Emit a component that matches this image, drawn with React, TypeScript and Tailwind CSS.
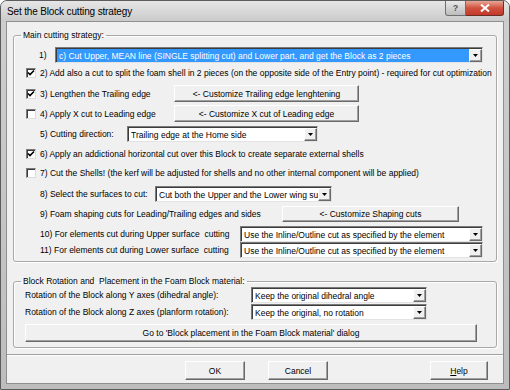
import type { ReactNode } from 'react'

function CheckBox({ checked }: { checked?: boolean }) {
  return (
    <span className="w-[10px] h-[10px] shrink-0 bg-white border border-t-[#7a7a7a] border-l-[#7a7a7a] border-r-[#dcdcdc] border-b-[#dcdcdc] shadow-[inset_1px_1px_0_#3c3c3c] flex items-center justify-center">
      {checked && (
        <svg width="8" height="8" viewBox="0 0 8 8">
          <path d="M1 3.5 L3 5.5 L7 1.5" fill="none" stroke="#000" strokeWidth="1.6" />
        </svg>
      )}
    </span>
  )
}

function Arrow() {
  return (
    <span className="w-[13px] h-full shrink-0 bg-[#f0f0f0] border border-t-white border-l-white border-r-[#696969] border-b-[#696969] shadow-[inset_-1px_-1px_0_#a0a0a0] flex items-center justify-center">
      <svg width="5" height="3" viewBox="0 0 5 3">
        <path d="M0 0 H5 L2.5 3 Z" fill="#000" />
      </svg>
    </span>
  )
}

function Combo({ w, text, selected }: { w: string; text: string; selected?: boolean }) {
  return (
    <div
      className={`${w} h-[16px] shrink-0 flex bg-white border border-t-[#7a7a7a] border-l-[#7a7a7a] border-r-[#e3e3e3] border-b-[#e3e3e3] shadow-[inset_1px_1px_0_#3c3c3c] pl-[1px] pt-[1px]`}
    >
      <div
        className={`flex-1 min-w-0 whitespace-nowrap flex items-center px-[2px] ${
          selected ? 'bg-[#3399ff] text-white' : 'text-black'
        }`}
      >
        {text}
      </div>
      <Arrow />
    </div>
  )
}

function Btn({ w, h = 'h-[17px]', children }: { w: string; h?: string; children: ReactNode }) {
  return (
    <div
      className={`${w} ${h} shrink-0 flex items-center justify-center bg-[#f0f0f0] border border-t-white border-l-white border-r-[#696969] border-b-[#696969] shadow-[inset_-1px_-1px_0_#a0a0a0] whitespace-nowrap`}
    >
      {children}
    </div>
  )
}

export default function App() {
  return (
    <div className="w-[510px] h-[390px] flex flex-col bg-gradient-to-b from-[#cfcfcf] to-[#bdbdbd] border border-[#5c5c5c] rounded-t-[7px] font-['Liberation_Sans',Arial,sans-serif] text-[8.5px] leading-[12px] text-black overflow-hidden">
      <div className="h-[21px] shrink-0 flex items-start bg-gradient-to-b from-[#e6e6e6] to-[#c9c9c9]">
        <div className="pl-[6px] pt-[5px] text-[10px] tracking-[-0.15px] leading-[12px]">Set the Block cutting strategy</div>
        <div className="ml-auto mr-[5px] flex">
          <div className="w-[21px] h-[15px] flex items-center justify-center rounded-bl-[3px] border border-t-0 border-[#6f6f6f] bg-gradient-to-b from-[#e9e9e9] to-[#bcbcbc] text-[9px] font-bold text-[#555]">
            ?
          </div>
          <div className="w-[38px] h-[15px] flex items-center justify-center rounded-br-[3px] border border-t-0 border-l-0 border-[#6b2e26] bg-gradient-to-b from-[#e9a596] via-[#d0513f] to-[#c3392a]">
            <svg width="10" height="8" viewBox="0 0 10 8">
              <path d="M1 0.5 L9 7.5 M9 0.5 L1 7.5" stroke="#fff" strokeWidth="2" />
            </svg>
          </div>
        </div>
      </div>

      <div className="mx-[6px] mb-[6px] flex-1 bg-[#f0f0f0] ring-1 ring-[#8f8f8f] flex flex-col">
        <fieldset className="mx-[6px] mt-[7px] border border-[#a8a8a8] rounded-[3px] shadow-[inset_1px_1px_0_#fff,1px_1px_0_#fff] pb-[3px]">
          <legend className="ml-[7px] px-[2px] leading-[12px]">Main cutting strategy:</legend>

          <div className="mt-[6px] h-[16px] pl-[25px] flex items-center">
            <span className="w-[16px]">1)</span>
            <Combo
              w="w-[428px]"
              selected
              text="c) Cut Upper, MEAN line (SINGLE splitting cut) and Lower part, and get the Block as 2 pieces"
            />
          </div>

          <div className="mt-[2px] h-[16px] pl-[12px] flex items-center gap-[4px] whitespace-nowrap">
            <CheckBox checked />
            <span>
              2) Add also a cut to split the foam shell in 2 pieces (on the opposite side of the Entry point) - required for cut optimization
            </span>
          </div>

          <div className="mt-[4px] h-[17px] pl-[12px] flex items-center gap-[4px]">
            <CheckBox checked />
            <span className="w-[130px]">3) Lengthen the Trailing edge</span>
            <Btn w="w-[185px]">&lt;- Customize Trailing edge lenghtening</Btn>
          </div>

          <div className="mt-[3px] h-[17px] pl-[12px] flex items-center gap-[4px]">
            <CheckBox />
            <span className="w-[130px]">4) Apply X cut to Leading edge</span>
            <Btn w="w-[185px]">&lt;- Customize X cut of Leading edge</Btn>
          </div>

          <div className="mt-[4px] h-[16px] pl-[26px] flex items-center">
            <span className="w-[87px]">5) Cutting direction:</span>
            <Combo w="w-[191px]" text="Trailing edge at the Home side" />
          </div>

          <div className="mt-[4px] h-[16px] pl-[12px] flex items-center gap-[4px] whitespace-nowrap">
            <CheckBox checked />
            <span>6) Apply an addictional horizontal cut over this Block to create separate external shells</span>
          </div>

          <div className="mt-[3px] h-[16px] pl-[12px] flex items-center gap-[4px] whitespace-nowrap">
            <CheckBox />
            <span>7) Cut the Shells! (the kerf will be adjusted for shells and no other internal component will be applied)</span>
          </div>

          <div className="mt-[5px] h-[16px] pl-[26px] flex items-center">
            <span className="w-[115px]">8) Select the surfaces to cut:</span>
            <Combo w="w-[177px]" text="Cut both the Upper and the Lower wing su" />
          </div>

          <div className="mt-[4px] h-[16px] pl-[26px] flex items-center">
            <span className="w-[242px] whitespace-nowrap">9) Foam shaping cuts for Leading/Trailing edges and sides</span>
            <Btn w="w-[177px]" h="h-[16px]">&lt;- Customize Shaping cuts</Btn>
          </div>

          <div className="mt-[4px] h-[16px] pl-[26px] flex items-center">
            <span className="w-[200px] whitespace-pre">10) For elements cut during Upper surface  cutting</span>
            <Combo w="w-[243px]" text="Use the Inline/Outline cut as specified by the element" />
          </div>

          <div className="h-[16px] pl-[26px] flex items-center">
            <span className="w-[200px] whitespace-pre">11) For elements cut during Lower surface  cutting</span>
            <Combo w="w-[243px]" text="Use the Inline/Outline cut as specified by the element" />
          </div>
        </fieldset>

        <fieldset className="mx-[6px] mt-[13px] border border-[#a8a8a8] rounded-[3px] shadow-[inset_1px_1px_0_#fff,1px_1px_0_#fff] pb-[5px]">
          <legend className="ml-[7px] px-[2px] leading-[12px] whitespace-pre">Block Rotation and  Placement in the Foam Block material:</legend>

          <div className="h-[16px] pl-[11px] flex items-center">
            <span className="w-[226px]">Rotation of the Block along Y axes (dihedral angle):</span>
            <Combo w="w-[176px]" text="Keep the original dihedral angle" />
          </div>
          <div className="mt-[1px] h-[16px] pl-[11px] flex items-center">
            <span className="w-[226px]">Rotation of the Block along Z axes (planform rotation):</span>
            <Combo w="w-[176px]" text="Keep the original, no rotation" />
          </div>
          <div className="mt-[4px] pl-[11px] flex">
            <Btn w="w-[452px]" h="h-[18px]">Go to 'Block placement in the Foam Block material' dialog</Btn>
          </div>
        </fieldset>

        <div className="mt-[6px] h-[2px] border-t border-[#a0a0a0] border-b border-b-white" />

        <div className="mt-[5px] flex">
          <div className="ml-[178px]">
            <Btn w="w-[60px]" h="h-[19px]">OK</Btn>
          </div>
          <div className="ml-[23px]">
            <Btn w="w-[60px]" h="h-[19px]">Cancel</Btn>
          </div>
          <div className="ml-[102px]">
            <Btn w="w-[58px]" h="h-[19px]">
              <span>
                <span className="underline">H</span>elp
              </span>
            </Btn>
          </div>
        </div>
      </div>
    </div>
  )
}
